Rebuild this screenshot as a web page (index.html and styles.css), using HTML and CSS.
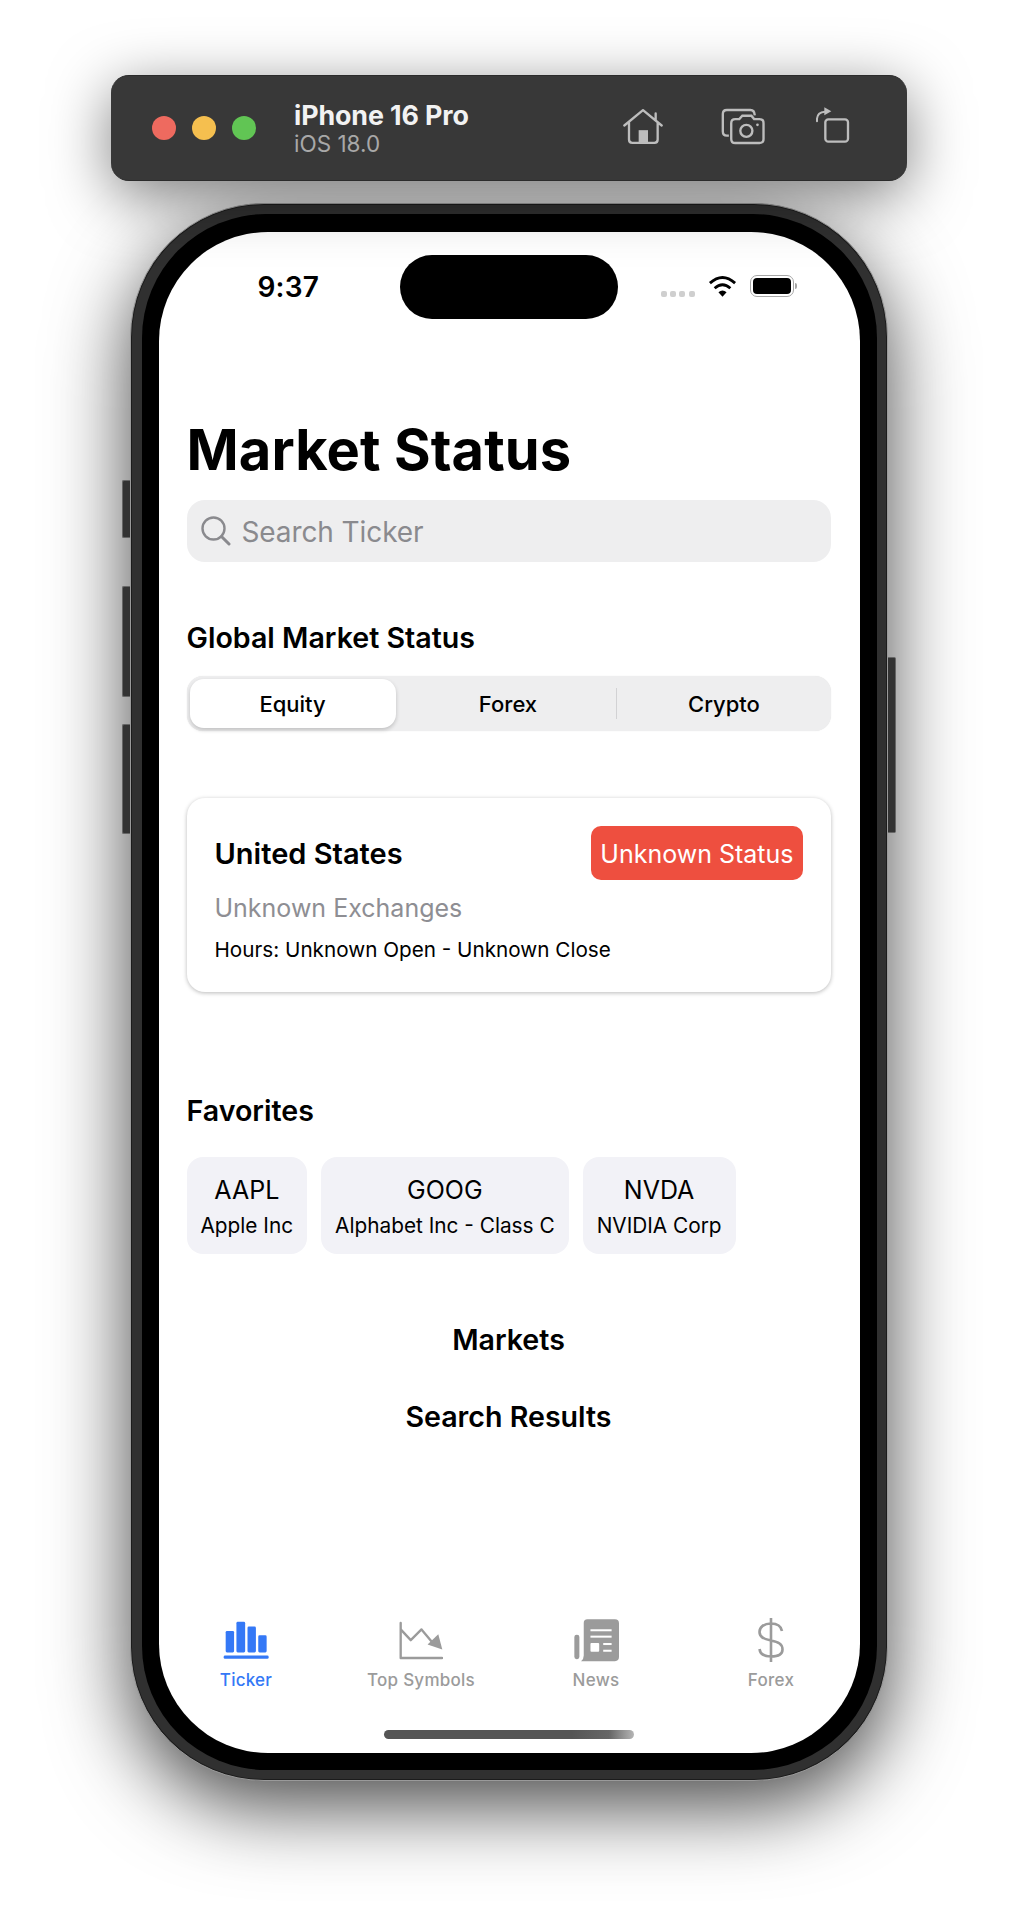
FILE: index.html
```html
<!DOCTYPE html>
<html lang="en">
<head>
<meta charset="utf-8">
<title>Market Status</title>
<link rel="stylesheet" href="styles.css">
</head>
<body>
<div class="toolbar">
  <div class="lights"><span class="light red"></span><span class="light yellow"></span><span class="light green"></span></div>
  <div class="device-info">
    <div class="device-name">iPhone 16 Pro</div>
    <div class="device-os">iOS 18.0</div>
  </div>
  <div class="tool-icons">
    <svg class="ico-home" viewBox="40 40 120 110"><path d="M44 92 100 46 156 92M58 82V134Q58 144 68 144H134Q144 144 144 134V82M138 75V56" fill="none" stroke="#bdbdbd" stroke-width="7" stroke-linecap="round" stroke-linejoin="round"/><rect x="87" y="106" width="28" height="38" fill="#bdbdbd"/></svg>
    <svg class="ico-cam" viewBox="335 40 130 110"><g fill="none" stroke="#bdbdbd" stroke-width="7"><path d="M358 122H352Q340 122 340 110V58Q340 46 352 46H422Q434 46 435 62"/><path d="M377 73H389L398 63H425L433 73H449Q461 73 461 85V132Q461 144 449 144H377Q365 144 365 132V85Q365 73 377 73Z"/><circle cx="410" cy="108" r="18"/></g><circle cx="443" cy="90" r="4" fill="#bdbdbd"/></svg>
    <svg class="ico-rot" viewBox="615 33 105 108"><rect x="646" y="70" width="68" height="67" rx="9" fill="none" stroke="#bdbdbd" stroke-width="7"/><path d="M621 76V68Q622 49 645 47" fill="none" stroke="#bdbdbd" stroke-width="6" stroke-linecap="round"/><path d="M643 34 664 46 643 58Z" fill="#bdbdbd"/></svg>
  </div>
</div>

<div class="phone">
  <span class="hw hw-action"></span>
  <span class="hw hw-up"></span>
  <span class="hw hw-down"></span>
  <span class="hw hw-power"></span>
  <div class="bezel">
    <div class="screen">
      <div class="statusbar">
        <div class="time">9:37</div>
        <div class="island"></div>
        <div class="status-right">
          <div class="dots"><i></i><i></i><i></i><i></i></div>
          <svg class="wifi" viewBox="170 28 92 70"><g fill="none" stroke="#000" stroke-width="9"><path d="M176 54Q216 18 256 54"/><path d="M191 70Q216 48 241 70"/></g><path d="M203 83Q216 72 229 83L216 97Z"/></svg>
          <div class="battery"><div class="battery-fill"></div></div>
          <div class="battery-cap"></div>
        </div>
      </div>

      <div class="content">
        <h1 class="page-title">Market Status</h1>
        <div class="search">
          <svg class="search-ico" viewBox="0 0 30 30"><circle cx="12.5" cy="12.5" r="11" fill="none" stroke="#8a8a8e" stroke-width="2.4"/><path d="M20.5 20.5 28 28" stroke="#8a8a8e" stroke-width="3" stroke-linecap="round"/></svg>
          <span class="search-text">Search Ticker</span>
        </div>

        <h2 class="section-title global-title">Global Market Status</h2>
        <div class="segmented">
          <div class="seg seg-active">Equity</div>
          <div class="seg seg-shift">Forex</div>
          <div class="seg seg-shift seg-divided">Crypto</div>
        </div>

        <div class="card">
          <div class="card-head">
            <div class="country">United States</div>
            <div class="badge">Unknown Status</div>
          </div>
          <div class="exchanges">Unknown Exchanges</div>
          <div class="hours">Hours: Unknown Open - Unknown Close</div>
        </div>

        <h2 class="section-title fav-title">Favorites</h2>
        <div class="chips">
          <div class="chip"><div class="chip-sym">AAPL</div><div class="chip-name">Apple Inc</div></div>
          <div class="chip"><div class="chip-sym">GOOG</div><div class="chip-name">Alphabet Inc - Class C</div></div>
          <div class="chip"><div class="chip-sym">NVDA</div><div class="chip-name">NVIDIA Corp</div></div>
        </div>

        <h2 class="section-title center markets-title">Markets</h2>
        <h2 class="section-title center results-title">Search Results</h2>
      </div>

      <div class="tabbar">
        <div class="tabs">
          <div class="tab tab-active">
            <svg class="tab-ico" viewBox="370 0 140 120"><g fill="#3478f6"><rect x="378" y="33" width="25" height="64" rx="4"/><rect x="410" y="6" width="26" height="91" rx="4"/><rect x="443" y="20" width="25" height="77" rx="4"/><rect x="475" y="46" width="25" height="51" rx="4"/><rect x="372" y="106" width="134" height="10" rx="4"/></g></svg>
            <span class="tab-label">Ticker</span>
          </div>
          <div class="tab">
            <svg class="tab-ico" viewBox="25 25 140 125"><path d="M33 37V141H156" fill="none" stroke="#9b9b9b" stroke-width="7" stroke-linecap="round" stroke-linejoin="round"/><path d="M33 56 63 88 95 56 125 92" fill="none" stroke="#9b9b9b" stroke-width="7" stroke-linejoin="round"/><path d="M113 101 145 70 157 116Z" fill="#9b9b9b"/></svg>
            <span class="tab-label">Top Symbols</span>
          </div>
          <div class="tab">
            <svg class="tab-ico news-ico" viewBox="548 24 140 130"><rect x="552" y="73" width="15" height="73" rx="7" fill="#9b9b9b"/><path d="M591 27H673Q685 27 685 39V140Q685 152 673 152H572Q580 146 580 135V38Q580 27 591 27Z" fill="#9b9b9b"/><g fill="#fff"><rect x="600" y="57" width="63" height="6"/><rect x="600" y="76" width="63" height="6"/><rect x="600" y="98" width="26" height="26" rx="3"/><rect x="638" y="98" width="25" height="6"/><rect x="638" y="118" width="25" height="6"/></g></svg>
            <span class="tab-label">News</span>
          </div>
          <div class="tab">
            <svg class="tab-ico dollar-ico" viewBox="0 0 28 44"><path d="M25 13C24 8 20 5.500 14 5.500 7 5.500 2.500 9 2.500 14 2.500 19 6.500 21 14 22.500 21.500 24 25.500 26 25.500 31.500 25.500 36 21 38.500 14 38.500 7 38.500 3 35.500 2.500 31M14 0V44" fill="none" stroke="#9b9b9b" stroke-width="2.600"/></svg>
            <span class="tab-label">Forex</span>
          </div>
        </div>
        <div class="home-indicator"></div>
      </div>
    </div>
  </div>
</div>
</body>
</html>
```

FILE: styles.css
```css
* { box-sizing: border-box; }
html, body { margin: 0; padding: 0; background: #fff; }
body {
  width: 1018px;
  height: 1932px;
  overflow: hidden;
  font-family: Inter, "Liberation Sans", sans-serif;
  color: #000;
}

/* Simulator toolbar */
.toolbar {
  display: flex;
  align-items: center;
  width: 796px;
  height: 106px;
  margin: 75px 0 0 111px;
  padding-left: 41px;
  background: #383838;
  border-radius: 18px;
  border-top: 1px solid #2b2b2b;
  border-bottom: 1px solid #2b2b2b;
  box-shadow: 0 14px 60px rgba(0,0,0,.5);
  position: relative;
  z-index: 2;
}
.lights { display: flex; gap: 16px; width: 142px; margin-top: -1px; }
.light { width: 24px; height: 24px; border-radius: 50%; }
.red { background: #ee6a5f; }
.yellow { background: #f5bf4f; }
.green { background: #61c554; }
.device-info { width: 329px; margin-top: 2px; }
.device-name { font-size: 26.800px; line-height: 30px; font-weight: 700; color: #f2f2f2; letter-spacing: -.1px; }
.device-os { font-size: 22.500px; line-height: 28px; color: #a8a8a8; }
.tool-icons { display: flex; align-items: center; margin-top: -3px; }
.ico-home { width: 40px; height: 37px; margin-right: 58px; }
.ico-cam { width: 44px; height: 37px; margin-right: 50px; }
.ico-rot { width: 35px; height: 36px; margin-top: -4px; }

/* Phone body */
.phone {
  position: relative;
  width: 758px;
  height: 1578px;
  margin: 22px 0 0 130px;
  padding: 10px 10.500px;
  background: #303030;
  border: 1.500px solid #9a9a9a;
  border-radius: 134px;
  box-shadow: inset 0 0 0 1px #1c1c1c, 0 25px 80px rgba(0,0,0,.72);
}
.hw {
  position: absolute;
  width: 8px;
  background: #333;
  border: 1px solid #666;
}
.hw-action, .hw-up, .hw-down { left: -9px; border-right: 0; border-radius: 2px 0 0 2px; }
.hw-action { top: 276px; height: 58px; }
.hw-up { top: 382px; height: 111px; }
.hw-down { top: 520px; height: 110px; }
.hw-power { right: -9px; top: 453px; height: 176px; border-left: 0; border-radius: 0 2px 2px 0; }
.bezel {
  height: 100%;
  padding: 17.500px 17px;
  background: #000;
  border-radius: 124px;
}
.screen {
  display: flex;
  flex-direction: column;
  height: 1521px;
  background: #fff;
  border-radius: 109px;
  overflow: hidden;
}

/* Status bar */
.statusbar {
  display: flex;
  height: 185px;
  padding: 23px 0 0 99px;
}
.time { width: 142px; margin-top: 14px; font-size: 28px; line-height: 36px; font-weight: 600; letter-spacing: .2px; }
.island { width: 218px; height: 64px; background: #000; border-radius: 32px; }
.status-right { display: flex; align-items: flex-start; margin-left: 43px; padding-top: 20px; }
.dots { display: flex; gap: 3.400px; margin-top: 16px; margin-right: 13px; }
.dots i { width: 6px; height: 6px; border-radius: 2px; background: #cfcfcf; }
.wifi { width: 29px; height: 22px; margin-right: 13px; }
.battery {
  width: 44px;
  height: 22px;
  padding: 2px;
  border: 1.500px solid #a6a6a6;
  border-radius: 7px;
}
.battery-fill { height: 100%; background: #000; border-radius: 4px; }
.battery-cap { width: 2px; height: 6px; margin: 8px 0 0 1.500px; background: #a6a6a6; border-radius: 0 2px 2px 0; }

/* Main content */
.content { flex: 1; padding: 0 29px 0 28px; }
.page-title { margin: 0; font-size: 56px; line-height: 66px; font-weight: 700; letter-spacing: .1px; }
.search {
  display: flex;
  align-items: center;
  height: 62px;
  margin-top: 17px;
  padding-left: 14px;
  background: #eeeeef;
  border-radius: 18px;
}
.search-ico { width: 30px; height: 30px; }
.search-text { margin-left: 11px; padding-top: 2px; font-size: 28px; letter-spacing: -.1px; color: #8a8a8e; }
.section-title { margin: 0; font-size: 28.600px; line-height: 36px; font-weight: 600; }
.center { text-align: center; }
.global-title { margin-top: 58px; }
.segmented {
  display: grid;
  grid-template-columns: 206px 220px 1fr;
  height: 55px;
  margin-top: 20px;
  padding: 3px;
  background: #eeeeef;
  border-radius: 16px;
  box-shadow: 0 0 1px rgba(0,0,0,.12);
}
.seg {
  position: relative;
  display: flex;
  align-items: center;
  justify-content: center;
  padding-top: 2px;
  font-size: 22px;
  font-weight: 500;
}
.seg-shift { padding-left: 5px; }
.seg-active {
  background: #fff;
  border-radius: 14px;
  box-shadow: 0 2px 4px rgba(0,0,0,.2);
}
.seg-divided::before {
  content: "";
  position: absolute;
  left: 0;
  top: 9px;
  bottom: 9px;
  width: 1.500px;
  background: #d2d2d4;
}
.card {
  margin-top: 67px;
  padding: 28px;
  height: 194px;
  border-radius: 18px;
  background: #fff;
  box-shadow: 0 1px 4px rgba(0,0,0,.28);
}
.card-head { display: flex; align-items: center; justify-content: space-between; height: 54px; }
.country { padding-top: 2px; font-size: 29px; font-weight: 600; }
.badge {
  display: flex;
  align-items: center;
  height: 54px;
  padding: 2px 9px 0;
  background: #ee4f3f;
  border-radius: 10px;
  color: #fff;
  font-size: 25px;
}
.exchanges { margin-top: 11px; font-size: 25px; line-height: 34px; color: #8e8e93; }
.hours { margin-top: 11px; font-size: 20.700px; line-height: 28px; }
.fav-title { margin-top: 101px; }
.chips { display: flex; gap: 14px; margin-top: 28px; }
.chip {
  height: 97px;
  padding: 15px 14px 0;
  text-align: center;
  background: #f2f2f7;
  border-radius: 16px;
}
.chip-sym { font-size: 25px; line-height: 36px; }
.chip-name { margin-top: 4px; font-size: 20.800px; line-height: 28px; }
.markets-title { margin-top: 68px; }
.results-title { margin-top: 41px; }

/* Tab bar */
.tabbar { height: 135px; flex: none; }
.tabs { display: grid; grid-template-columns: repeat(4, 175px); }
.tab { display: flex; flex-direction: column; align-items: center; }
.tab-ico { width: 47px; height: 44px; }
.news-ico { width: 47px; height: 44px; }
.dollar-ico { width: 28px; height: 44px; }
.tab-label { margin-top: 6px; font-size: 17px; line-height: 24px; font-weight: 500; letter-spacing: .25px; color: #9b9b9b; }
.tab-active .tab-label { color: #3478f6; }
.home-indicator {
  width: 250px;
  height: 9px;
  margin: 38px auto 0;
  border-radius: 5px;
  background: linear-gradient(90deg, #555 0%, #555 75%, #666 90%, #b5b5b5 100%);
}
```
